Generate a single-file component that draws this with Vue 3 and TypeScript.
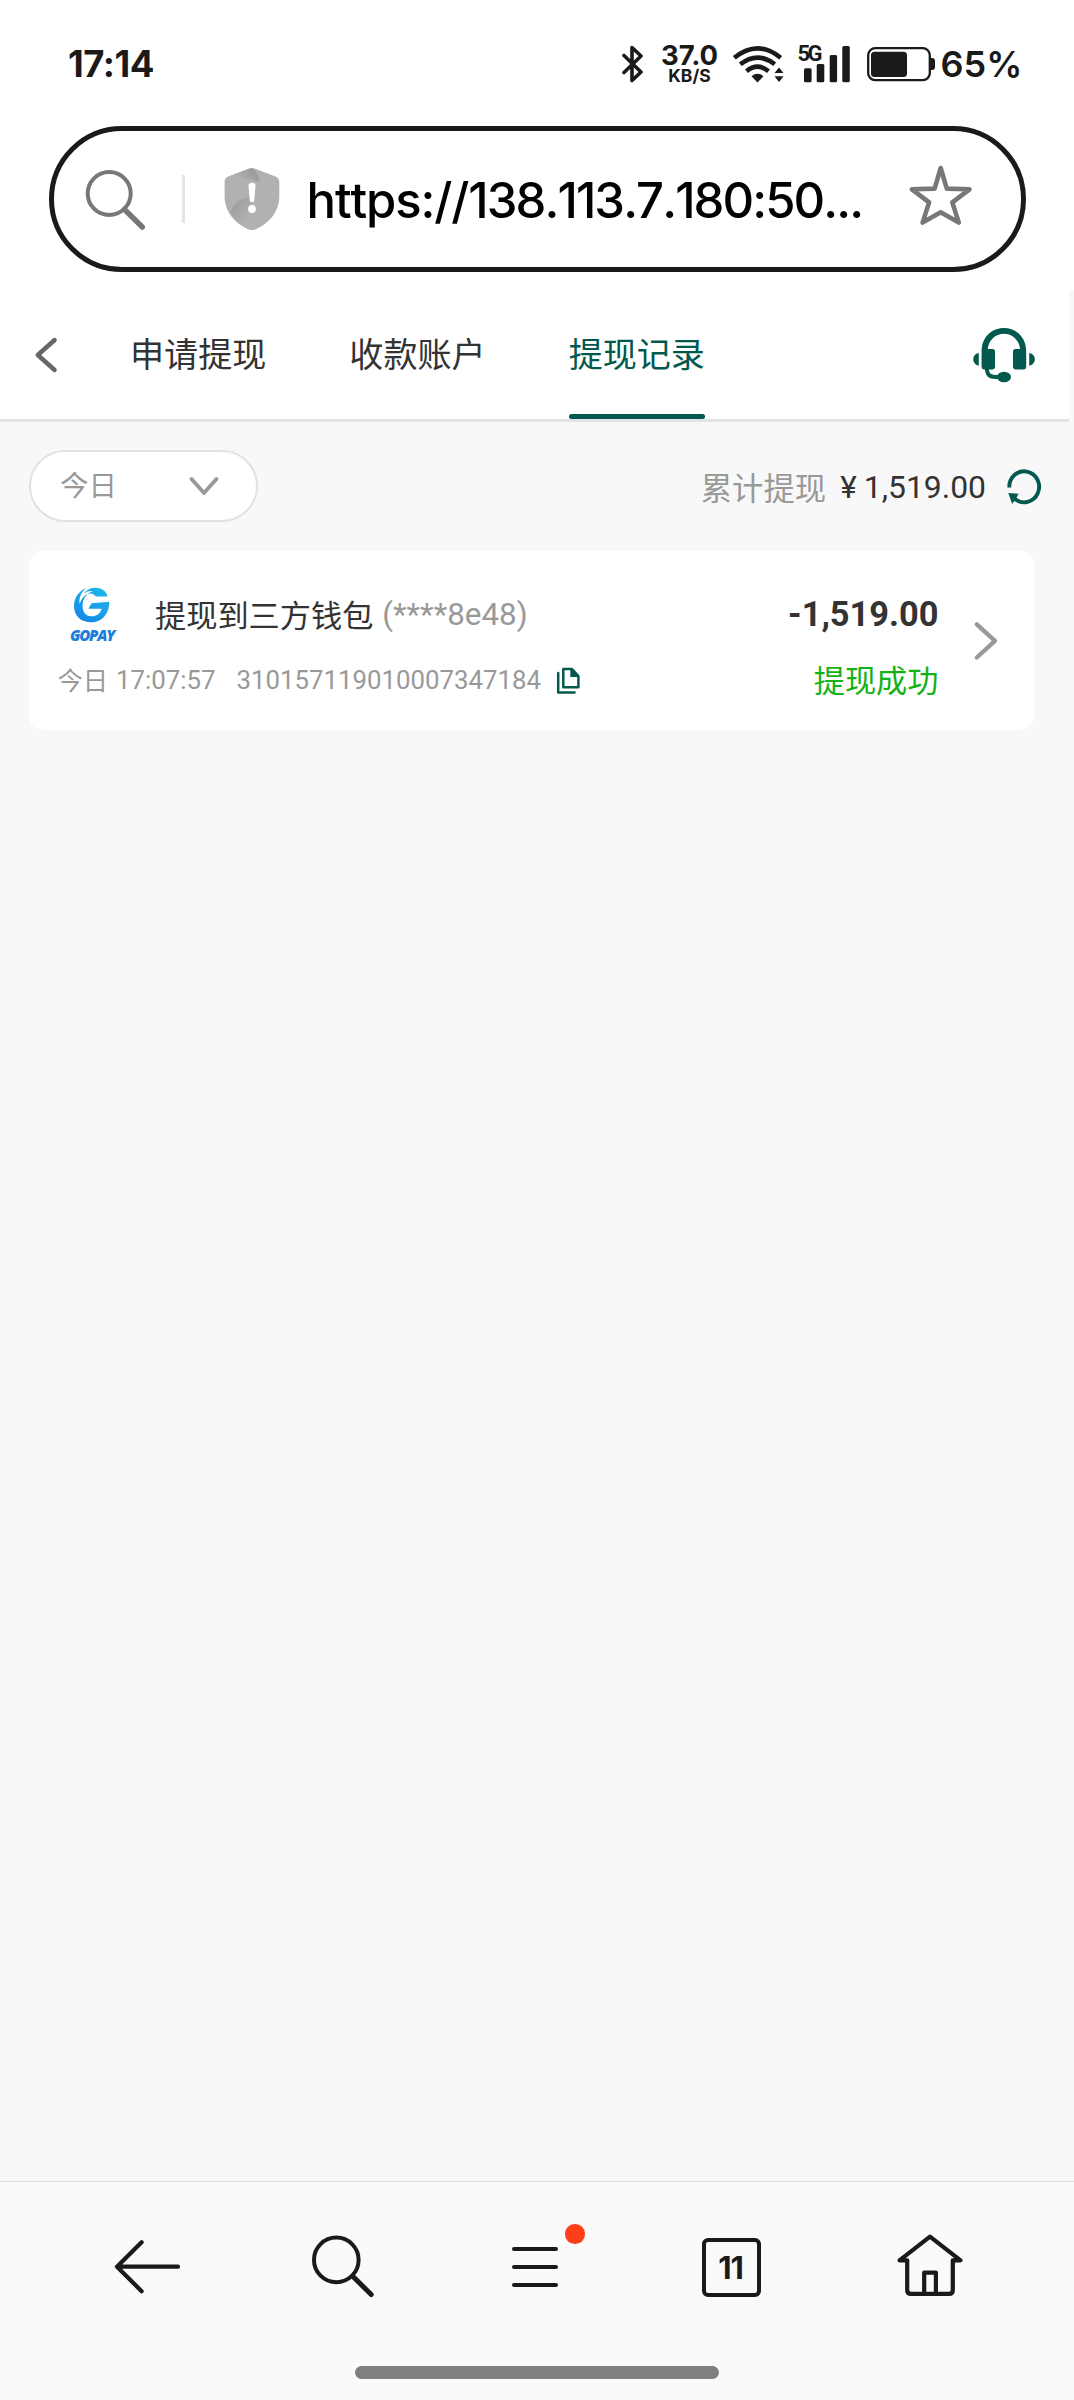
<script setup lang="ts">
import { ref } from 'vue'

interface WithdrawRecord {
  title: string
  account: string
  day: string
  time: string
  orderNo: string
  amount: string
  status: string
}

const tabs: string[] = ['申请提现', '收款账户', '提现记录']
const activeTab = ref(2)
const range = ref('今日')
const total = ref('1,519.00')
const pageCount = ref(11)

const records = ref<WithdrawRecord[]>([
  {
    title: '提现到三方钱包',
    account: '(****8e48)',
    day: '今日',
    time: '17:07:57',
    orderNo: '310157119010007347184',
    amount: '-1,519.00',
    status: '提现成功',
  },
])
</script>

<template>
  <div class="screen">
    <div class="statusbar">
      <span class="clock">17:14</span>
      <div class="indicators">
        <svg class="bt" width="22" height="38" viewBox="0 0 22 38">
          <path d="M2 10.5 19 27 10 35.5V2.500L19 11 2 27.500" fill="none" stroke="#1a1a1a" stroke-width="3.6" stroke-linejoin="round" stroke-linecap="round" />
        </svg>
        <div class="speed">
          <span class="speed-num">37.0</span>
          <span class="speed-unit">KB/S</span>
        </div>
        <svg class="wifi" width="52" height="38" viewBox="732 45 52 38">
          <g fill="none" stroke="#1a1a1a" stroke-width="4.600">
            <path d="M734.300 57.800Q757.500 38.800 780.700 57.800" />
            <path d="M740.300 64.300Q757.500 50.800 774.700 64.300" />
            <path d="M746.500 71.200Q757.500 62.200 768.500 71.200" />
          </g>
          <path d="M751.500 76.200Q757.500 71.300 763.500 76.200L757.500 82.400Z" fill="#1a1a1a" />
          <path d="M774.500 73 779 67.400 783.500 73ZM774.500 76.200H783.500L779 82Z" fill="#1a1a1a" />
        </svg>
        <div class="cell">
          <svg width="54" height="38" viewBox="797 45 54 38">
            <g fill="#1a1a1a">
              <rect x="804" y="68.200" width="7.600" height="14" rx="1.500" />
              <rect x="816.700" y="64" width="7.600" height="18.200" rx="1.500" />
              <rect x="829.700" y="55" width="7.400" height="27.200" rx="1.500" />
              <rect x="842.300" y="46" width="7.500" height="36.200" rx="1.500" />
            </g>
          </svg>
          <span class="net">5G</span>
        </div>
        <svg class="battery" width="70" height="36" viewBox="866 47 70 36">
          <rect x="868.200" y="49.200" width="61.600" height="32" rx="7" fill="none" stroke="#1a1a1a" stroke-width="2.300" />
          <rect x="871" y="52.700" width="36" height="25.300" rx="3.500" fill="#1a1a1a" />
          <path d="M930.500 59h1.500a3 3 0 0 1 3 3v6a3 3 0 0 1-3 3h-1.500z" fill="#1a1a1a" />
        </svg>
        <span class="percent">65%</span>
      </div>
    </div>

    <div class="addressbar">
      <svg class="a-search" width="62" height="62" viewBox="84 167 62 62">
        <circle cx="109.200" cy="192.500" r="21.500" fill="none" stroke="#777" stroke-width="4" />
        <path d="M124.500 208.500 142.300 226" stroke="#777" stroke-width="5.400" stroke-linecap="round" />
      </svg>
      <i class="a-divider"></i>
      <svg class="a-shield" width="56" height="64" viewBox="224 167 56 64">
        <defs>
          <linearGradient id="shTop" x1="0" y1="0.600" x2="1" y2="0.300">
            <stop offset="0.200" stop-color="#b2b2b2" />
            <stop offset="1" stop-color="#989898" />
          </linearGradient>
          <linearGradient id="shLow" x1="0" y1="0" x2="0.700" y2="0.600">
            <stop offset="0" stop-color="#989898" />
            <stop offset="0.900" stop-color="#b1b1b1" />
          </linearGradient>
        </defs>
        <path d="M249.500 168.600Q252 167.400 254.500 168.600L275.500 176.600Q279.300 178.200 279.300 182V196C279.300 211 270 223.500 254.500 229.600Q252 230.600 249.500 229.600C234 223.500 224.600 211 224.600 196V182Q224.600 178.200 228.500 176.600Z" fill="#b1b1b1" />
        <path d="M228.500 176.600 249.500 168.600Q252 167.600 254 169.500 259 174.500 259.500 182Q243 176 225 180Q226 177.600 228.500 176.600Z" fill="url(#shTop)" />
        <path d="M230.500 213C233 203.500 240 198 249 197.500L262 225.500Q252 231.500 248 229 237 224 230.500 213Z" fill="url(#shLow)" />
        <path d="M248.500 185.800Q248.500 182.700 252 182.700T255.500 185.800L254.200 200.500Q254 202.200 252 202.200T249.800 200.500Z" fill="#fff" />
        <circle cx="252" cy="209" r="3.900" fill="#fff" />
      </svg>
      <span class="url">https://<span class="host">138.113.7.180:50...</span></span>
      <svg class="a-star" width="66" height="64" viewBox="908 164 66 64">
        <path d="M940.700 168 946.800 188.600 969.500 189.300 952.300 202.400 958.800 222.600 940.700 212.200 922.600 222.600 929.100 202.400 911.900 189.300 934.600 188.600Z" fill="none" stroke="#777" stroke-width="4.600" stroke-linejoin="round" />
      </svg>
    </div>

    <main class="page">
      <header class="tabs">
        <svg class="back" width="26" height="40" viewBox="33 334.500 26 40">
          <path d="M54.600 339.500 37.800 354.500 54.600 369.500" fill="none" stroke="#666" stroke-width="4.400" stroke-linecap="round" stroke-linejoin="round" />
        </svg>
        <nav class="tablist">
          <a v-for="(tab, i) in tabs" :key="tab" class="tab" :class="{ active: i === activeTab }" @click="activeTab = i">{{ tab }}</a>
        </nav>
        <svg class="headset" width="64" height="58" viewBox="972 326 64 58">
          <g fill="#03594d">
            <path d="M981.600 367V351.500C981.600 337.500 991.500 328.100 1003.900 328.100S1026.200 337.500 1026.200 351.500V367Q1026.200 369.400 1024 369.400H1015.500Q1013 369.400 1013 367V351.500Q1013 349 1015.500 349H1020C1019.400 340.500 1012.500 333.700 1003.900 333.700S988.400 340.500 987.800 349H992.500Q995 349 995 351.500V367Q995 369.400 992.500 369.400H983.900Q981.600 369.400 981.600 367Z" />
            <path d="M978.800 353V365.700C975.500 365.200 973.300 362.500 973.300 359.300S975.500 353.500 978.800 353ZM1029.200 353V365.700C1032.500 365.200 1034.900 362.500 1034.900 359.300S1032.500 353.500 1029.200 353Z" />
            <ellipse cx="1004" cy="377" rx="7" ry="5.300" />
          </g>
          <path d="M987 368.500V370Q987.500 377 995 377H1000" fill="none" stroke="#03594d" stroke-width="3.900" />
        </svg>
      </header>

      <section class="filters">
        <button class="select" type="button">
          <span class="range">{{ range }}</span>
          <svg width="32" height="22" viewBox="188 475 32 22">
            <path d="M191.500 479 204 493 216.500 479" fill="none" stroke="#999" stroke-width="3.800" stroke-linecap="round" stroke-linejoin="round" />
          </svg>
        </button>
        <div class="summary">
          <span class="sum-label">累计提现</span>
          <span class="sum-yen">¥</span>
          <span class="sum-value">{{ total }}</span>
          <svg class="refresh" width="36" height="37" viewBox="1006 467.500 36 37">
            <path d="M1009.300 487A14.900 15.500 0 1 1 1015 498.500" fill="none" stroke="#03594d" stroke-width="3.900" />
            <path d="M1008.300 492.500 1018.500 493.200 1016.500 497.200 1012.200 503.500Z" fill="#03594d" />
          </svg>
        </div>
      </section>

      <article v-for="rec in records" :key="rec.orderNo" class="record">
        <div class="left">
          <div class="row-title">
            <div class="brand">
              <svg width="38" height="37" viewBox="74 587 38 37">
                <defs>
                  <linearGradient id="gp" x1="0.800" y1="0" x2="0.200" y2="1">
                    <stop offset="0" stop-color="#1fb7ea" />
                    <stop offset="1" stop-color="#1487e8" />
                  </linearGradient>
                </defs>
                <path d="M108.500 597.500C107.500 591.500 102 588.500 95.500 588.700 90.500 589 87 591.500 84.500 595 87.500 592.500 91 591.500 93.500 592.200 88.500 593.600 84.500 598.500 83.700 604.500 82.700 612.500 86.500 617.300 92.500 617.300 98 617.300 101.500 614 102.700 609.700H89.500L92.500 604.300 110.200 602.700C110.500 614.500 103 623.300 92 623.300 81.500 623.300 75 616.500 75 607 75 598.500 80.500 591.500 87 589.200 81.500 594 79.500 600 80.800 605 83.500 595 92 591.500 97 597.500Z" fill="url(#gp)" />
              </svg>
              <span class="brand-name">GOPAY</span>
            </div>
            <span class="title">{{ rec.title }}</span>
            <span class="account">{{ rec.account }}</span>
          </div>
          <div class="row-meta">
            <span class="day">{{ rec.day }}</span>
            <span class="time">{{ rec.time }}</span>
            <span class="order">{{ rec.orderNo }}</span>
            <svg class="copy" width="24" height="28" viewBox="556 667 24 28">
              <path d="M563.300 669H572L578.400 676V687.200H563.300Z" fill="none" stroke="#03594d" stroke-width="2.500" stroke-linejoin="round" />
              <path d="M570.300 668.500 579 677H570.300Z" fill="#03594d" />
              <path d="M558.200 673V692.500H574.500" fill="none" stroke="#03594d" stroke-width="2.500" stroke-linejoin="round" stroke-linecap="round" />
            </svg>
          </div>
        </div>
        <div class="right">
          <span class="amount">{{ rec.amount }}</span>
          <span class="state">{{ rec.status }}</span>
        </div>
        <svg class="more" width="26" height="42" viewBox="973 619.500 26 42">
          <path d="M976.800 623.800 995 640.400 976.800 657" fill="none" stroke="#999" stroke-width="4.300" stroke-linecap="round" stroke-linejoin="round" />
        </svg>
      </article>
    </main>

    <footer class="toolbar">
      <div class="tools">
        <svg width="68" height="56" viewBox="113 2239 68 56">
          <path d="M178 2266.700H117M141.600 2242.200 117 2266.700 141.600 2291.200" fill="none" stroke="#1a1a1a" stroke-width="4.200" stroke-linecap="round" stroke-linejoin="round" />
        </svg>
        <svg class="t-search" width="64" height="64" viewBox="310 2235 64 64">
          <circle cx="336.300" cy="2259.900" r="22.300" fill="none" stroke="#1a1a1a" stroke-width="4" />
          <path d="M353 2276.500 371.200 2294.600" stroke="#1a1a1a" stroke-width="5" stroke-linecap="round" />
        </svg>
        <div class="t-menu">
          <i></i><i></i><i></i>
          <b class="dot"></b>
        </div>
        <div class="t-pages">{{ pageCount }}</div>
        <svg class="t-home" width="68" height="66" viewBox="896 2234 68 66">
          <path d="M930 2236.700 960.500 2260.300H952.800V2290Q952.800 2293.900 949 2293.900H911Q907.200 2293.900 907.200 2290V2260.300H899.500ZM924.200 2293.500V2272.600H935.900V2293.500" fill="none" stroke="#1a1a1a" stroke-width="4.200" stroke-linejoin="round" />
        </svg>
      </div>
      <div class="homebar"></div>
    </footer>
  </div>
</template>

<style>
body {
  background: #fff;
}
</style>

<style scoped>
.screen {
  display: flex;
  flex-direction: column;
  width: 1074px;
  height: 2400px;
  overflow: hidden;
  background: #fff;
  color: #333;
  font-family: Roboto, "Noto Sans CJK SC", sans-serif;
}
.screen * {
  box-sizing: border-box;
}
svg {
  display: block;
  flex: none;
}
span {
  white-space: nowrap;
}
.statusbar {
  display: flex;
  justify-content: space-between;
  align-items: center;
  height: 126px;
  padding: 2px 54px 0 68px;
  color: #1a1a1a;
  font-family: Inter, sans-serif;
  font-weight: 700;
}
.clock {
  font-size: 36.500px;
  letter-spacing: -0.500px;
}
.indicators {
  display: flex;
  align-items: center;
}
.speed {
  display: flex;
  flex-direction: column;
  align-items: center;
  width: 58px;
  margin: 0 13px 0 17px;
}
.speed-num {
  font-size: 27.500px;
  line-height: 20px;
}
.speed-unit {
  margin-top: 4px;
  font-size: 17.500px;
  line-height: 14px;
}
.cell {
  position: relative;
  margin: 0 15px 0 13px;
}
.net {
  position: absolute;
  left: 1px;
  top: 0;
  font-family: Roboto, sans-serif;
  font-size: 22px;
  line-height: 17px;
  letter-spacing: -2.500px;
}
.percent {
  width: 79.500px;
  margin-left: 5px;
  font-size: 36px;
  font-weight: 600;
}
.addressbar {
  display: flex;
  flex: none;
  align-items: center;
  width: 977px;
  height: 146px;
  margin-left: 48.500px;
  padding-left: 30px;
  border: 5px solid #1a1a1a;
  border-radius: 73px;
}
.a-divider {
  width: 3px;
  height: 48px;
  margin: 0 39px 0 36px;
  background: #e4e4e4;
}
.url {
  width: 559px;
  margin-left: 27px;
  padding-top: 2px;
  color: #000;
  font-family: Inter, sans-serif;
  font-size: 49px;
  font-kerning: none;
  font-weight: 500;
  letter-spacing: -1.100px;
}
.host {
  letter-spacing: -1.900px;
}
.a-star {
  margin: -6px 0 0 42px;
}
.page {
  flex: 1;
  margin-top: 18px;
  background: #f8f8f8;
}
.tabs {
  display: flex;
  align-items: center;
  width: 1069px;
  height: 132px;
  padding: 0 33px;
  background: #fff;
  border-bottom: 3px solid #e2e2e2;
}
.tablist {
  display: flex;
  flex: 1;
  gap: 83px;
  height: 129px;
  margin-left: 71px;
}
.tab {
  height: 129px;
  font-size: 34.100px;
  line-height: 130px;
}
.active {
  position: relative;
  color: #03594d;
}
.active::after {
  content: "";
  position: absolute;
  left: 0;
  right: 0;
  bottom: 0;
  height: 5px;
  border-radius: 2.500px;
  background: #03594d;
}
.filters {
  display: flex;
  justify-content: space-between;
  align-items: center;
  height: 128px;
  padding: 0 32px 0 29px;
}
.select {
  display: flex;
  justify-content: space-between;
  align-items: center;
  width: 229px;
  height: 72px;
  padding: 0 36px 0 29px;
  background: #fff;
  border: 2.500px solid #e2e2e2;
  border-radius: 36px;
  color: #999;
  font-family: inherit;
  font-size: 28.500px;
}
.range {
  margin-bottom: 5px;
}
.summary {
  display: flex;
  align-items: center;
  font-size: 31.400px;
}
.sum-yen,
.sum-value {
  padding-top: 2px;
}
.sum-label {
  color: #999;
}
.sum-yen {
  margin-left: 14px;
}
.sum-value {
  margin-left: 7px;
  font-size: 31.900px;
}
.refresh {
  margin-left: 20px;
}
.record {
  display: flex;
  align-items: center;
  width: 1005px;
  height: 179px;
  margin: 1px 0 0 28.500px;
  padding: 0 35px 0 29px;
  background: #fff;
  border-radius: 14px;
}
.left {
  flex: 1;
  padding-top: 12px;
}
.row-title {
  display: flex;
  align-items: center;
  height: 62px;
  font-size: 31.200px;
}
.brand {
  display: flex;
  flex-direction: column;
  align-items: center;
  width: 69px;
  margin-right: 28.500px;
}
.brand-name {
  margin-top: 4px;
  color: #1b7ddc;
  font-family: "Open Sans", sans-serif;
  font-size: 15px;
  font-style: italic;
  font-weight: 800;
  letter-spacing: -1.200px;
  line-height: 16px;
}
.title {
  margin-bottom: 2px;
}
.account {
  margin-left: 9px;
  color: #999;
  font-size: 31.400px;
}
.row-meta {
  display: flex;
  align-items: center;
  height: 60px;
  margin-top: 5px;
  color: #999;
  font-size: 25.800px;
}
.day {
  margin-bottom: 3px;
  font-size: 25.300px;
}
.time {
  margin-left: 8px;
}
.order {
  margin-left: 21px;
}
.copy {
  margin: 1px 0 0 15px;
}
.right {
  display: flex;
  flex-direction: column;
  align-items: flex-end;
  padding-top: 16px;
}
.amount {
  font-size: 34.400px;
  font-weight: 700;
  line-height: 60px;
}
.state {
  margin-top: 7px;
  color: #14b214;
  font-size: 31.200px;
  line-height: 62px;
}
.more {
  margin-left: 34px;
}
.toolbar {
  flex: none;
  height: 219px;
  border-top: 1px solid #dcdcdc;
  background: #fafafa;
}
.tools {
  display: flex;
  align-items: center;
  height: 170px;
  padding-left: 113px;
}
.t-search {
  margin-left: 129px;
}
.t-menu {
  position: relative;
  display: flex;
  flex-direction: column;
  gap: 14px;
  width: 46px;
  margin-left: 138px;
}
.t-menu i {
  height: 4px;
  border-radius: 2px;
  background: #1a1a1a;
}
.dot {
  position: absolute;
  left: 53px;
  top: -23px;
  width: 19.500px;
  height: 19.500px;
  border-radius: 50%;
  background: #ff3f1a;
}
.t-pages {
  width: 59px;
  height: 59px;
  margin-left: 144px;
  padding-right: 2px;
  border: 4px solid #1a1a1a;
  border-radius: 6px;
  color: #1a1a1a;
  font-family: Inter, sans-serif;
  font-size: 31px;
  font-weight: 700;
  letter-spacing: -1.200px;
  line-height: 51px;
  text-align: center;
}
.t-home {
  margin-left: 134.500px;
}
.homebar {
  width: 364px;
  height: 13px;
  margin: 14px 0 0 355px;
  border-radius: 7px;
  background: #7f7f7f;
}
</style>
